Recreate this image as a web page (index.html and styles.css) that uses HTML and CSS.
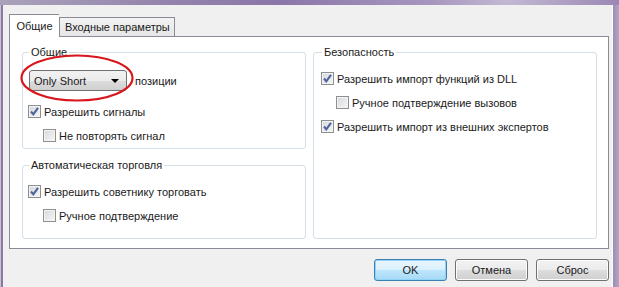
FILE: index.html
```html
<!DOCTYPE html>
<html lang="ru">
<head>
    <meta charset="UTF-8">
    <title>Общие</title>
    <link rel="stylesheet" href="styles.css">
</head>
<body>
    <div class="window">
        <div class="frame-top"></div>
        <div class="frame">
            <div class="frame-left"></div>

            <div class="dialog">
                <!-- вкладки -->
                <div class="tabs">
                    <div class="tab active">Общие</div>
                    <div class="tab">Входные параметры</div>
                </div>

                <div class="panel">
                    <div class="column">
                        <fieldset class="group group-common">
                            <legend>Общие</legend>
                            <div class="combo-row">
                                <div class="combo">
                                    <span>Only Short</span>
                                    <span class="arrow"></span>
                                </div>
                                <span class="combo-label">позиции</span>
                            </div>
                            <div class="option"><span class="check on"></span>Разрешить сигналы</div>
                            <div class="option sub"><span class="check"></span>Не повторять сигнал</div>
                        </fieldset>

                        <fieldset class="group group-auto">
                            <legend>Автоматическая торговля</legend>
                            <div class="option first"><span class="check on"></span>Разрешить советнику торговать</div>
                            <div class="option sub"><span class="check"></span>Ручное подтверждение</div>
                        </fieldset>
                    </div>

                    <div class="column">
                        <fieldset class="group group-security">
                            <legend>Безопасность</legend>
                            <div class="option first"><span class="check on"></span>Разрешить импорт функций из DLL</div>
                            <div class="option sub"><span class="check"></span>Ручное подтверждение вызовов</div>
                            <div class="option"><span class="check on"></span>Разрешить импорт из внешних экспертов</div>
                        </fieldset>
                    </div>
                </div>

                <!-- кнопки -->
                <div class="buttons">
                    <button class="btn default">OK</button>
                    <button class="btn">Отмена</button>
                    <button class="btn">Сброс</button>
                </div>
            </div>

            <div class="frame-right"></div>
        </div>

        <!-- красная пометка поверх комбобокса -->
        <svg class="mark" width="120" height="52" viewBox="0 0 120 52">
            <ellipse cx="58" cy="25" rx="55.5" ry="22.5" fill="none" stroke="#d8161c" stroke-width="2.2"/>
        </svg>
    </div>
</body>
</html>
```

FILE: styles.css
```css
body {
    margin: 0;
    font-family: "Liberation Sans", Arial, sans-serif;
    font-size: 11px;
    color: #1a1a1a;
}
.window {
    position: relative;
    width: 619px;
    height: 287px;
    overflow: hidden;
    background-color: #f0f0f0;
}
.frame-top {
    height: 5px;
    background: linear-gradient(90deg, #aaa2bb 0%, #9585ad 25%, #8a76a8 45%, #a797bf 70%, #c3b8d3 82%, #9a88b4 100%);
}
.frame {
    display: flex;
    height: 282px;
}
.frame-left {
    width: 2px;
    border-left: 1px solid #c9c3d1;
    background-color: #8a7aa2;
}
.frame-right {
    width: 6px;
    border-left: 1px solid #fbfbfd;
    background: linear-gradient(90deg, #9c8db3, #b2a6c6);
}
.dialog {
    flex: 1;
    padding: 9px 3px 0 6px;
}

/* вкладки */
.tabs {
    display: flex;
    align-items: flex-end;
    height: 22px;
}
.tab {
    height: 18px;
    line-height: 18px;
    padding: 0 4px 0 5px;
    border: 1px solid #898c95;
    border-bottom: none;
    background: linear-gradient(#f3f3f3, #e6e6e6);
    white-space: nowrap;
}
.tab.active {
    position: relative;
    z-index: 1;
    width: 50px;
    box-sizing: border-box;
    height: 23px;
    line-height: 22px;
    margin-bottom: -1px;
    padding: 0;
    text-align: center;
    background: #ffffff;
    border-right: none;
}
.panel {
    display: flex;
    gap: 7px;
    height: 213px;
    box-sizing: border-box;
    padding: 8px 0 0 12px;
    background: #ffffff;
    border: 1px solid #898c95;
}
.column {
    width: 284px;
    display: flex;
    flex-direction: column;
}

/* группы */
.group {
    margin: 0;
    padding: 0 0 0 5px;
    border: 1px solid #d5dfe5;
    border-radius: 3px;
    box-sizing: border-box;
    min-width: 0;
}
.group legend {
    padding: 0 2px;
    margin-left: 1px;
    line-height: 14px;
}
.group-common {
    height: 104px;
}
.group-auto {
    height: 81px;
    margin-top: 9px;
}
.group-security {
    height: 194px;
    padding-left: 7px;
}

.combo-row {
    display: flex;
    align-items: center;
    margin-top: 11px;
}
.combo {
    display: flex;
    align-items: center;
    justify-content: space-between;
    width: 98px;
    height: 21px;
    box-sizing: border-box;
    padding: 0 7px 0 4px;
    margin-left: 1px;
    border: 1px solid #707070;
    border-radius: 3px;
    background: linear-gradient(#f2f2f2 0%, #ebebeb 50%, #dddddd 51%, #cfcfcf 100%);
}
.arrow {
    width: 0;
    height: 0;
    border-left: 4px solid transparent;
    border-right: 4px solid transparent;
    border-top: 4px solid #000000;
}
.combo-label {
    margin-left: 8px;
}

.option {
    display: flex;
    align-items: center;
    gap: 3px;
    height: 19px;
    margin-top: 5px;
    white-space: nowrap;
}
.combo-row + .option {
    margin-top: 11px;
}
.option.first {
    margin-top: 10px;
}
.option.sub {
    padding-left: 15px;
}
.check {
    width: 13px;
    height: 13px;
    box-sizing: border-box;
    border: 1px solid #8e8f8f;
    background: linear-gradient(135deg, #d4d7dc, #f7f7f7);
    box-shadow: inset 0 0 0 1px #f4f4f4;
    flex-shrink: 0;
}
.check.on {
    background: url("data:image/svg+xml,%3Csvg xmlns='http://www.w3.org/2000/svg' width='11' height='11'%3E%3Cpath d='M2 5.5 L4.3 8.3 L9 1.8' fill='none' stroke='%234f639c' stroke-width='2.1'/%3E%3C/svg%3E") center no-repeat,
                linear-gradient(135deg, #d4d7dc, #f7f7f7);
}

/* кнопки */
.buttons {
    display: flex;
    justify-content: flex-end;
    gap: 8px;
    margin-top: 10px;
}
.btn {
    width: 73px;
    height: 22px;
    padding: 0;
    font-family: inherit;
    font-size: 11px;
    color: #1a1a1a;
    border: 1px solid #707070;
    border-radius: 3px;
    background: linear-gradient(#f2f2f2 0%, #ebebeb 50%, #dddddd 51%, #cfcfcf 100%);
    box-shadow: inset 0 0 0 1px #fcfcfc;
}
.btn.default {
    border-color: #3c7fb1;
    background: linear-gradient(#eaf6fd 0%, #d9f0fc 50%, #bee6fd 51%, #a7d9f5 100%);
    box-shadow: inset 0 0 0 1px #8fd4f7;
}

.mark {
    position: absolute;
    left: 19px;
    top: 53px;
}
```
